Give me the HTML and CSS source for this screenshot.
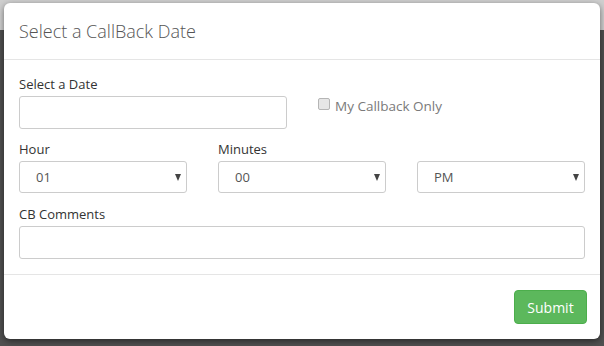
FILE: index.html
```html
<!DOCTYPE html>
<html lang="en">
<head>
 <meta charset="UTF-8">
 <title>Select a CallBack Date</title>
 <link rel="stylesheet" href="styles.css">
</head>
<body>
<div class="modal">
 <div class="modal_header">
  <h4>Select a CallBack Date</h4>
 </div>
 <form class="modal_body" name="cbForm">
  <div class="row two">
   <div class="group">
    <label for="cbdate">Select a Date</label>
    <input type="text" id="cbdate" class="field">
   </div>
   <div class="check">
    <label><input type="checkbox"> My Callback Only</label>
   </div>
  </div>
  <div class="row three">
   <div class="group">
    <label>Hour</label>
    <div class="select_wrap"><select class="field"><option>01</option></select></div>
   </div>
   <div class="group">
    <label>Minutes</label>
    <div class="select_wrap"><select class="field"><option>00</option></select></div>
   </div>
   <div class="group">
    <label>&nbsp;</label>
    <div class="select_wrap"><select class="field"><option>PM</option></select></div>
   </div>
  </div>
  <div class="group last">
   <label for="cbcomments">CB Comments</label>
   <input type="text" id="cbcomments" class="field">
  </div>
 </form>
 <div class="modal_footer">
  <button type="button" class="btn_submit">Submit</button>
 </div>
</div>
</body>
</html>
```

FILE: styles.css
```css
html, body{
  margin: 0;
  height: 100%;
}
body{
  background: linear-gradient(to bottom, #cfcfcf 0, #cfcfcf 30px, #505050 30px);
  font-family: "Open Sans", "Liberation Sans", sans-serif;
  font-size: 13px;
  color: #333;
  padding: 3px 4px 0 4px;
  box-sizing: border-box;
}
.modal{
  width: 596px;
  height: 336px;
  background: #fff;
  border-radius: 6px;
  box-shadow: 0 2px 6px rgba(0,0,0,.5);
  display: flex;
  flex-direction: column;
}
.modal_header{
  padding: 15px 15px 14px 15px;
  border-bottom: 1px solid #e5e5e5;
}
.modal_header h4{
  margin: 0;
  font-size: 18px;
  font-weight: 300;
  line-height: 27px;
  color: #555;
}
.modal_body{
  padding: 15px 15px 15px 15px;
  margin: 0;
}
.row{
  display: grid;
}
.row.two{
  grid-template-columns: 1fr 1fr;
  column-gap: 30px;
}
.row.three{
  grid-template-columns: 1fr 1fr 1fr;
  column-gap: 31px;
}
.group{
  margin-bottom: 11px;
}
.group.last{
  margin-top: 1px;
  margin-bottom: 0;
}
.group label{
  display: block;
  line-height: 19px;
  margin-bottom: 2px;
  color: #333;
}
.field{
  display: block;
  width: 100%;
  box-sizing: border-box;
  height: 33px;
  border: 1px solid #ccc;
  border-radius: 3px;
  background: #fff;
  font-family: inherit;
  font-size: 13px;
  color: #555;
  margin: 0;
}
.select_wrap{
  position: relative;
}
.select_wrap select{
  appearance: none;
  -webkit-appearance: none;
  height: 32px;
  padding: 0 0 0 16px;
}
.select_wrap::after{
  content: "";
  position: absolute;
  right: 6px;
  top: 13px;
  border-left: 3.5px solid transparent;
  border-right: 3.5px solid transparent;
  border-top: 7px solid #444;
  pointer-events: none;
}
.check{
  padding-top: 21px;
}
.check label{
  display: flex;
  align-items: center;
  line-height: 20px;
  color: #7a7a7a;
  font-size: 13.5px;
}
.check input{
  appearance: none;
  -webkit-appearance: none;
  width: 12px;
  height: 12px;
  margin: 0 5px 0 1px;
  border: 1px solid #b5b5b5;
  border-radius: 2px;
  background: #e6e6e6;
  box-sizing: border-box;
  position: relative;
  top: -2px;
}
.modal_footer{
  border-top: 1px solid #e5e5e5;
  padding: 15px 13px 15px 15px;
  display: flex;
  justify-content: flex-end;
}
.btn_submit{
  height: 34px;
  width: 73px;
  background: #5cb85c;
  border: 1px solid #4cae4c;
  border-radius: 4px;
  color: #fff;
  font-family: inherit;
  font-size: 14px;
  padding: 0;
}
```
